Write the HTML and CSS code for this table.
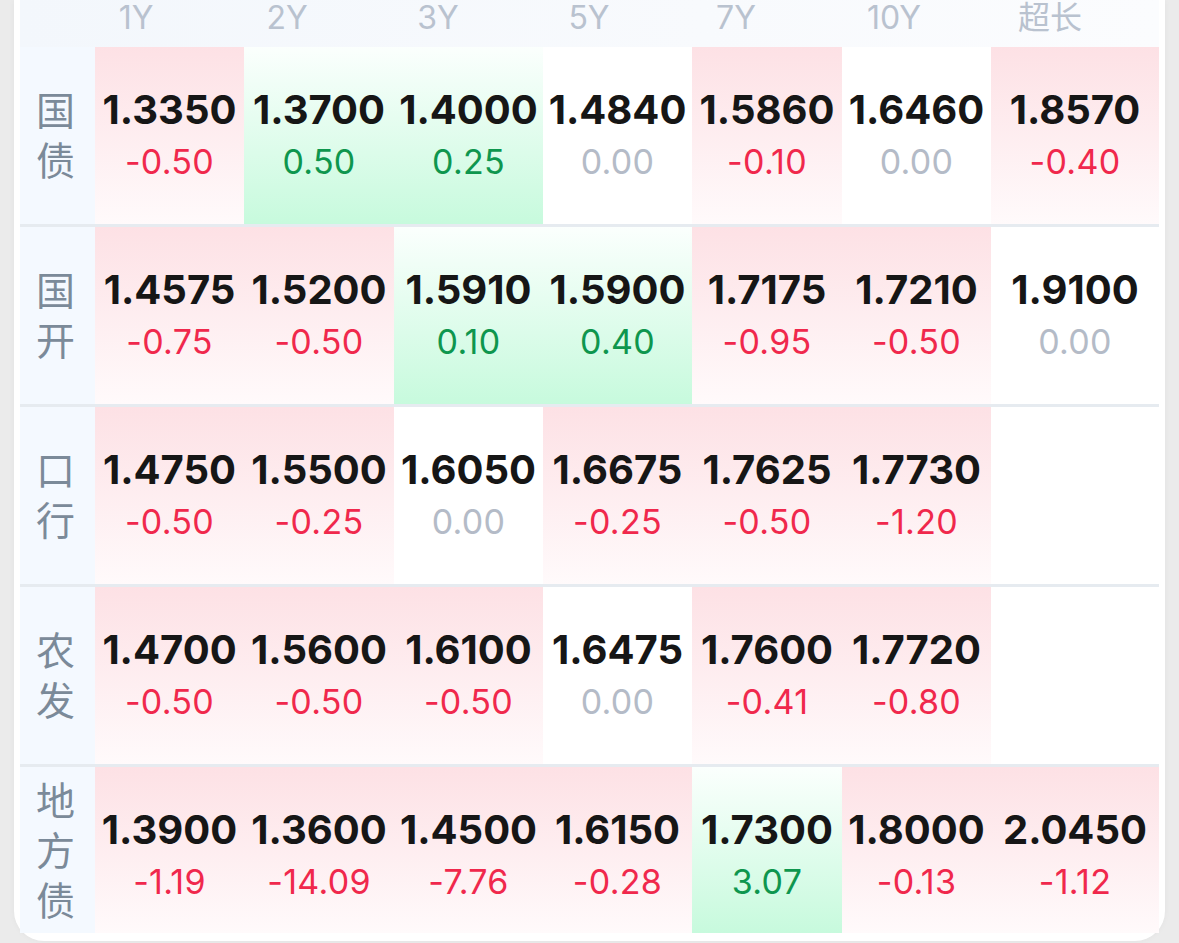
FILE: index.html
```html
<!DOCTYPE html>
<html lang="zh-CN">
<head>
<meta charset="utf-8">
<title>Bond yields</title>
<link rel="stylesheet" href="styles.css">
</head>
<body>
<div class="card">
  <div class="head">
    <div class="head-spacer"></div>
    <div class="hcell">1Y</div>
    <div class="hcell">2Y</div>
    <div class="hcell">3Y</div>
    <div class="hcell">5Y</div>
    <div class="hcell">7Y</div>
    <div class="hcell">10Y</div>
    <div class="hcell">超长</div>
  </div>

  <div class="row">
    <div class="label"><span class="ltext">国债</span></div>
    <div class="cell up"><div class="val">1.3350</div><div class="chg neg">-0.50</div></div>
    <div class="cell down"><div class="val">1.3700</div><div class="chg pos">0.50</div></div>
    <div class="cell down"><div class="val">1.4000</div><div class="chg pos">0.25</div></div>
    <div class="cell"><div class="val">1.4840</div><div class="chg zero">0.00</div></div>
    <div class="cell up"><div class="val">1.5860</div><div class="chg neg">-0.10</div></div>
    <div class="cell"><div class="val">1.6460</div><div class="chg zero">0.00</div></div>
    <div class="cell up"><div class="val">1.8570</div><div class="chg neg">-0.40</div></div>
  </div>

  <div class="row">
    <div class="label"><span class="ltext">国开</span></div>
    <div class="cell up"><div class="val">1.4575</div><div class="chg neg">-0.75</div></div>
    <div class="cell up"><div class="val">1.5200</div><div class="chg neg">-0.50</div></div>
    <div class="cell down"><div class="val">1.5910</div><div class="chg pos">0.10</div></div>
    <div class="cell down"><div class="val">1.5900</div><div class="chg pos">0.40</div></div>
    <div class="cell up"><div class="val">1.7175</div><div class="chg neg">-0.95</div></div>
    <div class="cell up"><div class="val">1.7210</div><div class="chg neg">-0.50</div></div>
    <div class="cell"><div class="val">1.9100</div><div class="chg zero">0.00</div></div>
  </div>

  <div class="row">
    <div class="label"><span class="ltext">口行</span></div>
    <div class="cell up"><div class="val">1.4750</div><div class="chg neg">-0.50</div></div>
    <div class="cell up"><div class="val">1.5500</div><div class="chg neg">-0.25</div></div>
    <div class="cell"><div class="val">1.6050</div><div class="chg zero">0.00</div></div>
    <div class="cell up"><div class="val">1.6675</div><div class="chg neg">-0.25</div></div>
    <div class="cell up"><div class="val">1.7625</div><div class="chg neg">-0.50</div></div>
    <div class="cell up"><div class="val">1.7730</div><div class="chg neg">-1.20</div></div>
    <div class="cell"></div>
  </div>

  <div class="row">
    <div class="label"><span class="ltext">农发</span></div>
    <div class="cell up"><div class="val">1.4700</div><div class="chg neg">-0.50</div></div>
    <div class="cell up"><div class="val">1.5600</div><div class="chg neg">-0.50</div></div>
    <div class="cell up"><div class="val">1.6100</div><div class="chg neg">-0.50</div></div>
    <div class="cell"><div class="val">1.6475</div><div class="chg zero">0.00</div></div>
    <div class="cell up"><div class="val">1.7600</div><div class="chg neg">-0.41</div></div>
    <div class="cell up"><div class="val">1.7720</div><div class="chg neg">-0.80</div></div>
    <div class="cell"></div>
  </div>

  <div class="row row-last">
    <div class="label"><span class="ltext">地方债</span></div>
    <div class="cell up"><div class="val">1.3900</div><div class="chg neg">-1.19</div></div>
    <div class="cell up"><div class="val">1.3600</div><div class="chg neg">-14.09</div></div>
    <div class="cell up"><div class="val">1.4500</div><div class="chg neg">-7.76</div></div>
    <div class="cell up"><div class="val">1.6150</div><div class="chg neg">-0.28</div></div>
    <div class="cell down"><div class="val">1.7300</div><div class="chg pos">3.07</div></div>
    <div class="cell up"><div class="val">1.8000</div><div class="chg neg">-0.13</div></div>
    <div class="cell up"><div class="val">2.0450</div><div class="chg neg">-1.12</div></div>
  </div>
</div>
</body>
</html>
```

FILE: styles.css
```css
html, body {
  margin: 0;
  padding: 0;
}
body {
  background: #ebebeb;
  width: 1179px;
  height: 943px;
  overflow: hidden;
  font-family: Inter, "Noto Sans CJK SC", sans-serif;
}
.card {
  margin-left: 14px;
  width: 1139px;
  padding: 0 6px 8px 6px;
  background: #ffffff;
  border-radius: 0 0 30px 30px;
  box-shadow: 0 0 6px rgba(0, 0, 0, 0.04);
}
.head {
  display: grid;
  grid-template-columns: 40.5px 151px 151px 151px 151px 143px 173px 139px;
  height: 47px;
  background: linear-gradient(to right, #f3f7fc, #f8fafd 60%, #fbfcfe);
}
.hcell {
  text-align: center;
  font-size: 32px;
  line-height: 35px;
  color: #b9c2cf;
  font-family: Inter, "Noto Sans CJK SC", sans-serif;
}
.row {
  display: grid;
  grid-template-columns: 75px 149px 150px 149px 149px 150px 149px 168px;
  height: 177px;
  border-bottom: 3px solid #e6ebf0;
}
.row-last {
  height: 166px;
  border-bottom: none;
}
.label {
  background: #f4f9ff;
  display: flex;
  align-items: center;
  justify-content: center;
  padding-right: 4px;
}
.ltext {
  writing-mode: vertical-rl;
  font-family: "Noto Sans CJK SC", sans-serif;
  font-size: 39px;
  line-height: 44px;
  letter-spacing: 11px;
  margin-bottom: -11px;
  color: #7b8a99;
}
.cell {
  display: flex;
  flex-direction: column;
  align-items: center;
  justify-content: center;
  padding-bottom: 4px;
}
.row-last .cell {
  padding-top: 12px;
}
.cell.up {
  background: linear-gradient(to bottom, #fde1e5, #fffafb);
}
.cell.down {
  background: linear-gradient(to bottom, #fbfffd, #c7fadd);
}
.val {
  font-size: 40px;
  font-weight: 700;
  line-height: 48px;
  color: #161616;
}
.chg {
  font-size: 34px;
  line-height: 40px;
  margin-top: 8px;
  letter-spacing: 0.3px;
}
.neg { color: #f0284c; }
.pos { color: #0e964e; }
.zero { color: #b4bbc7; }
```
